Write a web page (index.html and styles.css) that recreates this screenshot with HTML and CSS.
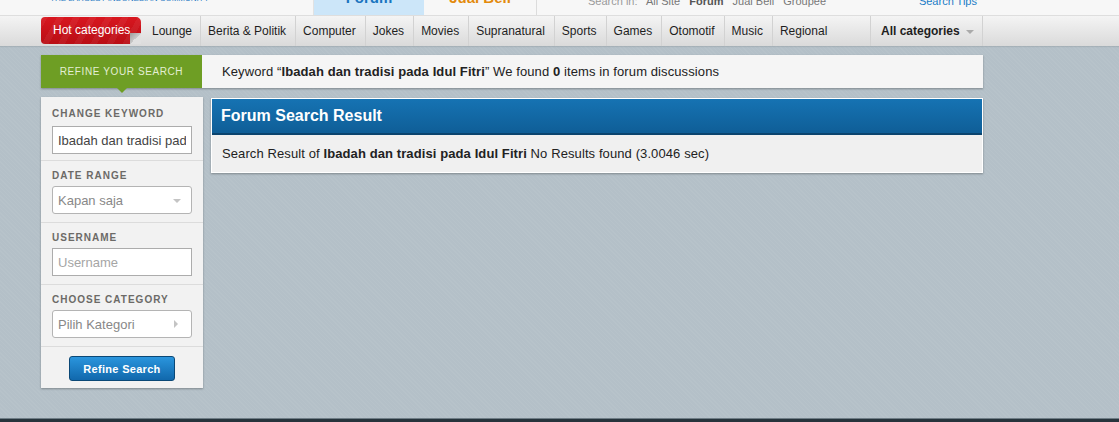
FILE: index.html
```html
<!DOCTYPE html>
<html lang="en">
<head>
    <meta charset="UTF-8">
    <meta name="viewport" content="width=device-width, initial-scale=1.0">
    <title>Forum Search</title>
    <link rel="stylesheet" href="styles.css">
</head>
<body>

    <!-- Top site bar (scrolled, only the bottom of it shows) -->
    <div class="topbar">
        <div class="wrap topbar-inner">
            <div class="tagline"><span>THE LARGEST INDONESIAN COMMUNITY</span></div>
            <div class="site-tabs">
                <a class="site-tab forum"><span>Forum</span></a>
                <a class="site-tab jualbeli"><span>Jual Beli</span></a>
            </div>
            <div class="search-in">
                <span class="muted">Search in:</span>
                <a>All Site</a>
                <a class="current">Forum</a>
                <a>Jual Beli</a>
                <a>Groupee</a>
            </div>
            <a class="search-tips">Search Tips</a>
        </div>
    </div>

    <!-- Category nav -->
    <div class="nav">
        <div class="wrap nav-inner">
            <a class="hot">Hot categories</a>
            <ul class="cats">
                <li>Lounge</li>
                <li>Berita &amp; Politik</li>
                <li>Computer</li>
                <li>Jokes</li>
                <li>Movies</li>
                <li>Supranatural</li>
                <li>Sports</li>
                <li>Games</li>
                <li>Otomotif</li>
                <li>Music</li>
                <li>Regional</li>
            </ul>
            <a class="all-cats">All categories <span class="caret"></span></a>
        </div>
    </div>

    <div class="wrap content">
        <div class="refine-bar">
            <div class="refine-label">REFINE YOUR SEARCH</div>
            <div class="refine-info">
                Keyword &ldquo;<b>Ibadah dan tradisi pada Idul Fitri</b>&rdquo; We found <b>0</b> items in forum discussions
            </div>
        </div>

        <div class="layout">
            <form class="sidebar">
                <div class="field">
                    <label>CHANGE KEYWORD</label>
                    <input class="text-input" type="text" value="Ibadah dan tradisi pada Idul Fitri">
                </div>
                <div class="field">
                    <label>DATE RANGE</label>
                    <div class="select-box">Kapan saja <span class="arrow-down"></span></div>
                </div>
                <div class="field">
                    <label>USERNAME</label>
                    <input class="text-input" type="text" placeholder="Username">
                </div>
                <div class="field">
                    <label>CHOOSE CATEGORY</label>
                    <div class="select-box">Pilih Kategori <span class="arrow-right"></span></div>
                </div>
                <div class="actions">
                    <button class="btn-refine" type="button">Refine Search</button>
                </div>
            </form>

            <div class="results">
                <div class="results-head">Forum Search Result</div>
                <div class="results-body">
                    Search Result of <b>Ibadah dan tradisi pada Idul Fitri</b> No Results found (3.0046 sec)
                </div>
            </div>
        </div>
    </div>

    <div class="footer"></div>

</body>
</html>
```

FILE: styles.css
```css
/* Global Styles */
* {
    margin: 0;
    padding: 0;
    box-sizing: border-box;
}

body {
    font-family: "Liberation Sans", Arial, sans-serif;
    font-size: 13px;
    color: #222;
    background-color: #b4c0c8;
    background-image: repeating-linear-gradient(45deg, rgba(255, 255, 255, 0.045) 0 1px, transparent 1px 3px);
    overflow: hidden;
}

a {
    text-decoration: none;
    cursor: pointer;
}

.wrap {
    width: 942px;
    margin-left: 41px;
}

/* Top bar */
.topbar {
    height: 15px;
    background-color: #f7f7f7;
    overflow: hidden;
}

.topbar-inner {
    display: flex;
    align-items: flex-end;
    height: 15px;
}

.tagline {
    width: 272px;
    padding-left: 9px;
    font-size: 8px;
    line-height: 8px;
    color: #2a7cc4;
    margin-bottom: 12px;
    white-space: nowrap;
}

.site-tabs {
    display: flex;
    height: 15px;
}

.site-tab {
    display: flex;
    justify-content: center;
    align-items: flex-end;
    height: 15px;
    font-size: 15px;
    line-height: 15px;
    font-weight: bold;
}

.site-tab span {
    margin-bottom: 10px;
}

.site-tab.forum {
    width: 111px;
    background-color: #cce6f9;
    border-left: 1px solid #e2e2e2;
    color: #1a74bf;
}

.site-tab.jualbeli {
    width: 113px;
    border-right: 1px solid #dcdcdc;
    color: #e38a0c;
}

.search-in {
    margin-left: 51px;
    margin-bottom: 8px;
    font-size: 11px;
    line-height: 11px;
    color: #777;
    white-space: nowrap;
}

.search-in .muted {
    color: #9a9a9a;
    margin-right: 6px;
}

.search-in a {
    margin-right: 6px;
}

.search-in .current {
    font-weight: bold;
    color: #555;
}

.search-tips {
    margin-left: auto;
    margin-right: 6px;
    margin-bottom: 8px;
    font-size: 11px;
    line-height: 11px;
    color: #1a7cc6;
}

/* Category nav */
.nav {
    height: 31px;
    border-top: 1px solid #dedede;
    background: linear-gradient(#f4f4f4, #dadada);
    box-shadow: 0 1px 1px rgba(0, 0, 0, 0.08);
    font-size: 12px;
}

.nav-inner {
    display: flex;
    height: 30px;
}

.hot {
    position: relative;
    margin-top: 1px;
    height: 27px;
    width: 100px;
    line-height: 27px;
    padding-left: 12px;
    color: #fff;
    border-radius: 4px 5px 0 4px;
    background-color: #cc1119;
    background-image: repeating-linear-gradient(120deg, rgba(255, 255, 255, 0.05) 0 6px, transparent 6px 14px),
        linear-gradient(#d8161f, #b90e15);
}

.hot::after {
    content: "";
    position: absolute;
    right: 0;
    bottom: 0;
    width: 11px;
    height: 11px;
    background: linear-gradient(135deg, #9c9c9c 0, #c8c8c8 50%, #e0e0e0 50%);
}

.cats {
    display: flex;
    list-style: none;
    margin-left: 4px;
}

.cats li {
    padding: 0 9px 0 7px;
    line-height: 30px;
    border-left: 1px solid #d2d2d2;
    color: #1e1e1e;
    white-space: nowrap;
}

.cats li:first-child {
    border-left: none;
    padding-left: 7px;
    padding-right: 8px;
}

.all-cats {
    margin-left: auto;
    width: 113px;
    padding-left: 10px;
    line-height: 30px;
    font-weight: bold;
    color: #1e1e1e;
    border-left: 1px solid #d2d2d2;
    border-right: 1px solid #d2d2d2;
    white-space: nowrap;
}

.caret {
    display: inline-block;
    width: 0;
    height: 0;
    margin-left: 3px;
    vertical-align: middle;
    border-left: 4px solid transparent;
    border-right: 4px solid transparent;
    border-top: 4px solid #aaa;
}

/* Content */
.content {
    padding-top: 9px;
}

.refine-bar {
    display: flex;
    height: 33px;
    background-color: #f5f5f5;
    box-shadow: 0 1px 2px rgba(0, 0, 0, 0.3);
}

.refine-label {
    position: relative;
    width: 161px;
    background-color: #6e9e24;
    color: #e4eed4;
    font-size: 10px;
    letter-spacing: 0.6px;
    line-height: 33px;
    text-align: center;
}

.refine-label::after {
    content: "";
    position: absolute;
    left: 76px;
    bottom: -5px;
    border-left: 5px solid transparent;
    border-right: 5px solid transparent;
    border-top: 5px solid #6e9e24;
}

.refine-info {
    padding-left: 20px;
    line-height: 33px;
    color: #222;
    letter-spacing: 0.1px;
}

.layout {
    display: flex;
    align-items: flex-start;
    gap: 8px;
    margin-top: 9px;
}

/* Sidebar */
.sidebar {
    width: 162px;
    background-color: #f2f2f2;
    box-shadow: 0 1px 2px rgba(0, 0, 0, 0.3);
}

.field {
    padding: 8px 11px 8px;
    border-bottom: 1px solid #dcdcdc;
}

.field:first-child {
    padding-top: 10px;
    padding-bottom: 6px;
}

.field label {
    display: block;
    font-size: 10px;
    line-height: 13px;
    font-weight: bold;
    letter-spacing: 1px;
    color: #6c6a67;
    margin-bottom: 4px;
    white-space: nowrap;
}

.field:first-child label {
    margin-bottom: 6px;
}

.text-input {
    display: block;
    width: 140px;
    height: 28px;
    padding: 0 5px;
    border: 1px solid #acacac;
    background-color: #fff;
    font-family: "Liberation Sans", Arial, sans-serif;
    font-size: 13px;
    color: #444;
    outline: none;
}

.text-input::placeholder {
    color: #a5a5a5;
}

.select-box {
    position: relative;
    width: 140px;
    height: 28px;
    padding-left: 5px;
    line-height: 27px;
    border: 1px solid #b4b4b4;
    border-radius: 3px;
    background-color: #fff;
    color: #888;
}

.arrow-down {
    position: absolute;
    right: 10px;
    top: 12px;
    border-left: 4px solid transparent;
    border-right: 4px solid transparent;
    border-top: 4px solid #c4c4c4;
}

.arrow-right {
    position: absolute;
    right: 13px;
    top: 9px;
    border-top: 4px solid transparent;
    border-bottom: 4px solid transparent;
    border-left: 4px solid #c4c4c4;
}

.actions {
    padding: 9px 0 7px;
    text-align: center;
}

.btn-refine {
    display: block;
    margin: 0 auto;
    width: 106px;
    height: 25px;
    border: 1px solid #0b4876;
    border-radius: 3px;
    background: linear-gradient(#2a95dd, #1168ac);
    color: #fff;
    font-family: "Liberation Sans", Arial, sans-serif;
    font-size: 11px;
    font-weight: bold;
    letter-spacing: 0.3px;
    cursor: pointer;
}

/* Results */
.results {
    flex: 1;
    margin-top: 1px;
    border: 1px solid #fff;
    background-color: #f0f0f0;
    box-shadow: 0 1px 2px rgba(0, 0, 0, 0.3);
}

.results-head {
    height: 36px;
    padding-left: 9px;
    line-height: 34px;
    font-size: 16px;
    font-weight: bold;
    color: #fff;
    background: linear-gradient(#1673b3, #0f5e97);
    border-bottom: 2px solid #0b446e;
}

.results-body {
    padding-left: 10px;
    line-height: 37px;
    color: #222;
    letter-spacing: 0.1px;
}

.footer {
    margin-top: 30px;
    height: 20px;
    border-top: 1px solid #6f7d86;
    background-color: #27343c;
}
```
